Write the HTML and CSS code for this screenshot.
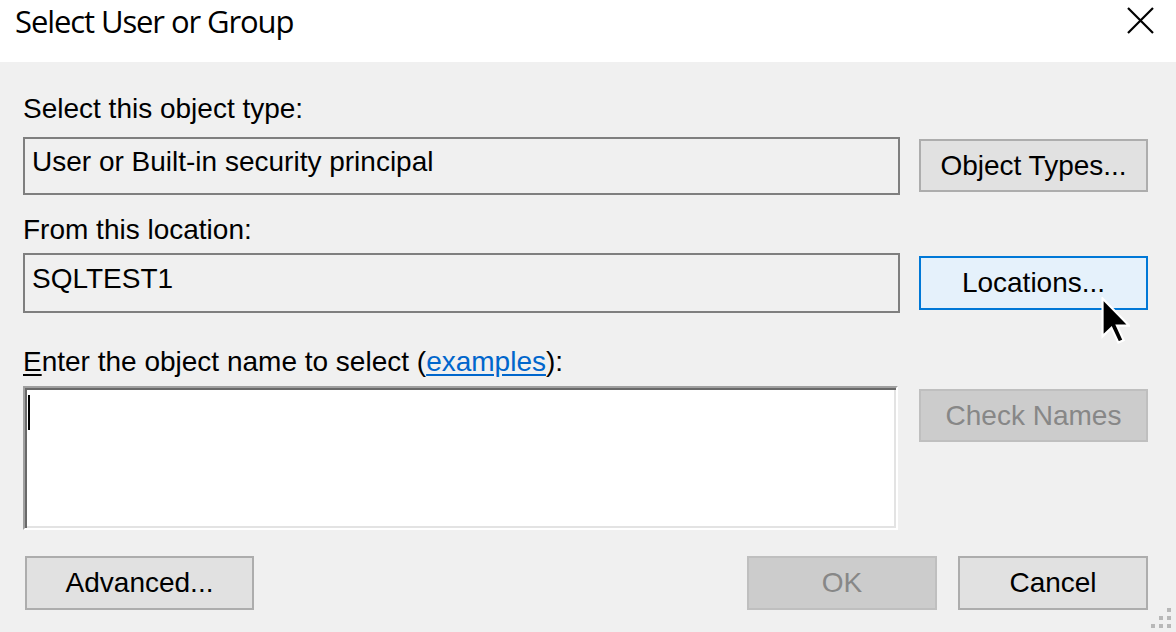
FILE: index.html
```html
<!DOCTYPE html>
<html lang="en">
<head>
<meta charset="utf-8">
<title>Select User or Group</title>
<link rel="stylesheet" href="styles.css">
</head>
<body>
<div class="dialog">
  <div class="titlebar">
    <span class="title">Select User or Group</span>
    <svg class="close" width="27" height="27" viewBox="0 0 27 27"><path d="M1 1 L26 26 M26 1 L1 26" stroke="#000" stroke-width="2.2" fill="none"/></svg>
  </div>
  <div class="content">
    <div class="label l1">Select this object type:</div>
    <div class="row r1">
      <div class="field f1">User or Built-in security principal</div>
      <div class="btn b1">Object Types...</div>
    </div>
    <div class="label l2">From this location:</div>
    <div class="row r2">
      <div class="field f2">SQLTEST1</div>
      <div class="btn btn-hover b2">Locations...</div>
    </div>
    <div class="label l3"><span class="ul">E</span>nter the object name to select (<span class="link">examples</span>):</div>
    <div class="row r3">
      <div class="textarea"><span class="caret"></span></div>
      <div class="btn btn-disabled b3">Check Names</div>
    </div>
    <div class="footer">
      <div class="btn adv">Advanced...</div>
      <div class="spacer"></div>
      <div class="btn btn-disabled small">OK</div>
      <div class="btn small cancel">Cancel</div>
    </div>
  </div>
  <svg class="cursor" width="29" height="48" viewBox="0 0 12 20"><path d="M0.6 0.6 L0.6 16.4 L4.3 12.8 L7.2 19 L9.4 18 L6.6 11.9 L11.6 11.9 Z" fill="#000" stroke="#fff" stroke-width="0.9" stroke-linejoin="miter"/></svg>
  <div class="grip">
    <span class="d d1"></span><span class="d d2"></span><span class="d d3"></span><span class="d d4"></span><span class="d d5"></span><span class="d d6"></span>
  </div>
</div>
</body>
</html>
```
FILE: styles.css
```css
* { box-sizing: border-box; }
html, body { margin: 0; padding: 0; }
body {
  width: 1176px;
  height: 632px;
  overflow: hidden;
  background: #f0f0f0;
  font-family: "Liberation Sans", Arial, sans-serif;
  font-size: 28px;
  color: #000;
}
.dialog { position: relative; width: 1176px; height: 632px; }
.titlebar {
  height: 62px;
  background: #fff;
  display: flex;
  justify-content: space-between;
  align-items: flex-start;
  padding: 0 22px 0 15px;
}
.title {
  font-family: "Open Sans", "Noto Sans", sans-serif;
  font-size: 31px;
  letter-spacing: -1.1px;
  line-height: 40px;
  margin-top: 1px;
}
.close { margin-top: 7px; }
.content { padding: 0 28px 0 23px; }
.label { height: 36px; line-height: 36px; white-space: nowrap; }
.l1 { margin-top: 29px; }
.l2 { margin-top: 17px; }
.l3 { margin-top: 31px; }
.ul { text-decoration: underline; text-underline-offset: 3px; }
.link { color: #0066cc; text-decoration: underline; text-underline-offset: 3px; }
.row { display: flex; gap: 19px; align-items: flex-start; }
.r1 { margin-top: 10px; }
.r2 { margin-top: 5px; }
.r3 { margin-top: 6px; }
.field {
  width: 877px;
  border: 2px solid #7f7f7f;
  background: #f0f0f0;
  line-height: 36px;
  padding-left: 7px;
  white-space: nowrap;
}
.f1 { height: 58px; padding-top: 5px; }
.f2 { height: 60px; padding-top: 6px; }
.textarea {
  width: 875px;
  margin-right: 2px;
  height: 144px;
  background: #fff;
  border: 2px solid;
  border-color: #a0a0a0 #fff #fff #a0a0a0;
  box-shadow: inset 2px 2px 0 #696969, inset -2px -2px 0 #e3e3e3;
  padding: 7px 0 0 3px;
}
.caret { display: block; width: 2px; height: 35px; background: #000; }
.btn {
  width: 229px;
  height: 54px;
  border: 2px solid #adadad;
  background: #e1e1e1;
  display: flex;
  align-items: center;
  justify-content: center;
  white-space: nowrap;
  line-height: 36px;
}
.b1 { margin-top: 2px; height: 53px; }
.b2 { margin-top: 3px; }
.b3 { margin-top: 3px; height: 53px; }
.btn-hover { background: #e5f1fb; border-color: #0078d7; }
.btn-disabled { background: #cccccc; border-color: #bfbfbf; color: #878787; }
.footer { display: flex; margin-top: 26px; }
.adv { margin-left: 2px; }
.spacer { flex: 1; }
.small { width: 190px; }
.cancel { margin-left: 21px; }
.cursor { position: absolute; left: 1101px; top: 297px; }
.grip { position: absolute; right: 4px; bottom: 3px; width: 21px; height: 21px; }
.d { position: absolute; width: 4px; height: 4px; background: #b8b8b8; }
.d1 { left: 16px; top: 0; }
.d2 { left: 8px; top: 8px; }
.d3 { left: 16px; top: 8px; }
.d4 { left: 0; top: 16px; }
.d5 { left: 8px; top: 16px; }
.d6 { left: 16px; top: 16px; }
```
